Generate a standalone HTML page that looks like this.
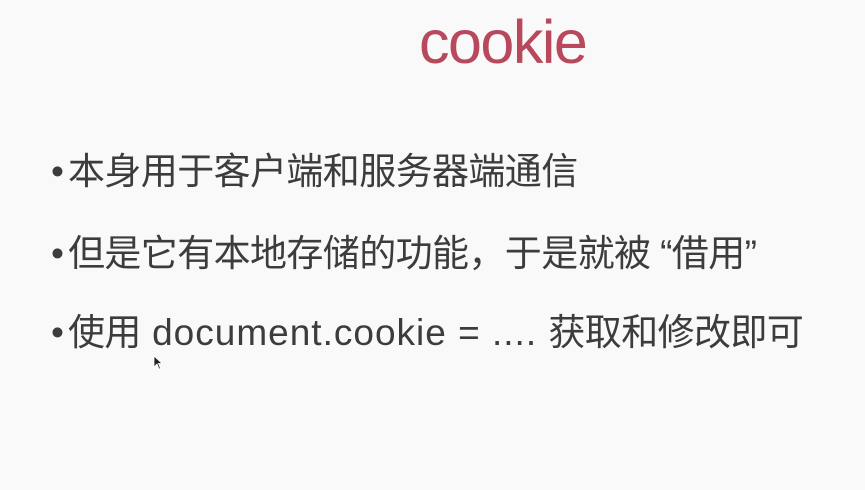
<!DOCTYPE html>
<html><head><meta charset="utf-8"><style>
html,body{margin:0;padding:0;}
body{width:865px;height:490px;background:#f9f9f9;position:relative;overflow:hidden;font-family:"Liberation Sans","Noto Sans CJK SC",sans-serif;}
.t{position:absolute;left:419px;top:4px;font-size:61px;color:#b8485c;letter-spacing:-1.5px;line-height:76px;}
.l{position:absolute;left:51px;font-size:37px;color:#3c3c3c;line-height:40px;white-space:nowrap;letter-spacing:-0.6px;}
.l span.b{display:inline-block;width:17px;}
.lat{letter-spacing:1px;}
</style></head><body>
<div class="t">cookie</div>
<div class="l" style="top:152px"><span class="b">•</span>本身用于客户端和服务器端通信</div>
<div class="l" style="top:234px"><span class="b">•</span>但是它有本地存储的功能，于是就被 “借用”</div>
<div class="l" style="top:313px"><span class="b">•</span>使用<span class="lat"> document.cookie = .... </span>获取和修改即可</div>
<svg style="position:absolute;left:153px;top:355px" width="10" height="16"><path d="M1 1 L1 12 L4 9 L6 14 L7.5 13.5 L5.5 8.5 L9 8.5 Z" fill="#222" stroke="#fff" stroke-width="0.8"/></svg>
</body></html>
